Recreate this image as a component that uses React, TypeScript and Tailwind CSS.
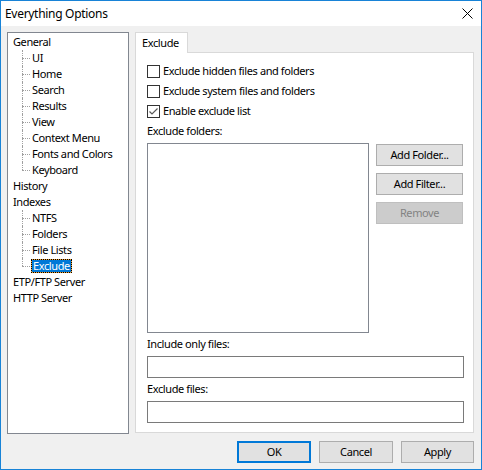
import React from 'react';

const font = { fontFamily: '"Segoe UI", "Noto Sans", "Liberation Sans", sans-serif' };

type Node = { label: string; children?: string[] };

const tree: Node[] = [
  { label: 'General', children: ['UI', 'Home', 'Search', 'Results', 'View', 'Context Menu', 'Fonts and Colors', 'Keyboard'] },
  { label: 'History' },
  { label: 'Indexes', children: ['NTFS', 'Folders', 'File Lists', 'Exclude'] },
  { label: 'ETP/FTP Server' },
  { label: 'HTTP Server' },
];

const Checkbox = ({ checked, label }: { checked?: boolean; label: string }) => (
  <div className="h-[20px] flex items-center">
    <span className="w-[13px] h-[13px] border border-[#333333] bg-white flex items-center justify-center">
      {checked && (
        <svg width="11" height="11" viewBox="0 0 11 11">
          <path d="M1.5 5.5 L4 8 L9.5 2.5" fill="none" stroke="#5a5a5a" strokeWidth="1.2" />
        </svg>
      )}
    </span>
    <span className="ml-[3px]">{label}</span>
  </div>
);

const Btn = ({ children, disabled, primary, w }: { children: React.ReactNode; disabled?: boolean; primary?: boolean; w: string }) => (
  <div
    className={`${w} h-[22px] flex items-center justify-center ${
      disabled
        ? 'bg-[#cccccc] border border-[#bfbfbf] text-[#838383]'
        : primary
        ? 'bg-[#e1e1e1] border-2 border-[#0078d7]'
        : 'bg-[#e1e1e1] border border-[#adadad]'
    }`}
  >
    {children}
  </div>
);

const ChildRow = ({ label, last, selected }: { label: string; last: boolean; selected?: boolean }) => (
  <div className="relative h-[16px] flex items-center pl-[18px]">
    <span className={`absolute left-[9px] top-0 border-l border-dotted border-[#a0a0a0] ${last ? 'h-[8px]' : 'h-[16px]'}`} />
    <span className="absolute left-[9px] top-[8px] w-[8px] border-t border-dotted border-[#a0a0a0]" />
    {selected ? (
      <span className="bg-[#f0a030] border border-dotted border-black flex">
        <span className="bg-[#0078d7] text-white h-[12px] leading-[12px] px-[1px]">{label}</span>
      </span>
    ) : (
      <span className="pl-[1px]">{label}</span>
    )}
  </div>
);

export default function App() {
  return (
    <div
      className="w-[482px] h-[470px] border border-[#1883d7] bg-[#f0f0f0] flex flex-col text-[11px] tracking-[-0.4px] text-black whitespace-nowrap"
      style={font}
    >
      <div className="h-[25px] bg-white flex items-center justify-between pl-[4px] pr-[8px] text-[12px] tracking-[-0.3px]">
        <span>Everything Options</span>
        <svg width="11" height="11" viewBox="0 0 11 11">
          <path d="M0.5 0.5 L10.5 10.5 M10.5 0.5 L0.5 10.5" stroke="#000" strokeWidth="1" />
        </svg>
      </div>

      <div className="flex-1 flex flex-col pl-[6px] pr-[7px] pt-[6px]">
        <div className="flex h-[402px] gap-[6px]">
          <div className="w-[122px] h-full border border-[#828790] bg-white pt-[1px] pl-[5px] leading-[16px]">
            {tree.map((n) => (
              <div key={n.label}>
                <div className="h-[16px] flex items-center">{n.label}</div>
                {n.children?.map((c, i) => (
                  <ChildRow
                    key={c}
                    label={c}
                    last={i === n.children!.length - 1}
                    selected={c === 'Exclude'}
                  />
                ))}
              </div>
            ))}
          </div>

          <div className="w-[339px] flex flex-col">
            <div className="relative z-10 -mb-px w-[53px] h-[21px] bg-white border-t border-l border-r border-[#d9d9d9] flex items-center pl-[6px]">
              Exclude
            </div>
            <div className="h-[381px] border border-[#d9d9d9] bg-white pl-[11px] pr-[9px] pt-[8px]">
              <Checkbox label="Exclude hidden files and folders" />
              <Checkbox label="Exclude system files and folders" />
              <Checkbox checked label="Enable exclude list" />
              <div className="h-[20px] flex items-center">Exclude folders:</div>
              <div className="flex mt-[2px]">
                <div className="w-[222px] h-[190px] border border-[#828790] bg-white" />
                <div className="ml-[7px] mt-[1px] flex flex-col gap-[7px]">
                  <Btn w="w-[87px]">Add Folder...</Btn>
                  <Btn w="w-[87px]">Add Filter...</Btn>
                  <Btn w="w-[87px]" disabled>
                    Remove
                  </Btn>
                </div>
              </div>
              <div className="h-[23px] flex items-center">Include only files:</div>
              <div className="h-[22px] border border-[#7a7a7a] bg-white" />
              <div className="h-[23px] flex items-center">Exclude files:</div>
              <div className="h-[22px] border border-[#7a7a7a] bg-white" />
            </div>
          </div>
        </div>

        <div className="flex justify-end gap-[8px] mt-[7px]">
          <Btn w="w-[74px]" primary>
            OK
          </Btn>
          <Btn w="w-[74px]">Cancel</Btn>
          <Btn w="w-[73px]">Apply</Btn>
        </div>
      </div>
    </div>
  );
}
